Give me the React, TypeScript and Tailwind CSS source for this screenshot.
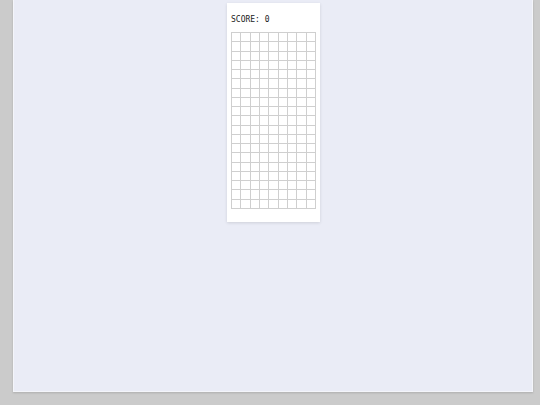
const COLS = 9;
const ROWS = 19;

function Board() {
  const cells = Array.from({ length: COLS * ROWS });
  return (
    <div className="grid h-[177px] w-[85px] grid-cols-9 grid-rows-[repeat(19,1fr)] border-l border-t border-[#cfcfcf]">
      {cells.map((_, i) => (
        <div key={i} className="border-b border-r border-[#cfcfcf]" />
      ))}
    </div>
  );
}

export default function App() {
  return (
    <div className="h-[405px] w-[540px] bg-[#cbcbcb] pl-[13px] pr-[7px] pb-[13px]">
      <div className="flex h-full w-full justify-center border border-t-0 border-[#f4f5fa] bg-[#eaecf6] shadow-[0_1px_2px_rgba(0,0,0,0.15)]">
        <div className="mt-[3px] ml-[1px] flex h-[219px] w-[93px] flex-col bg-white pl-[4px] pt-[12px] shadow-[0_1px_3px_rgba(0,0,0,0.12)]">
          <div className="h-[17px] font-['DejaVu_Sans_Mono',monospace] text-[8px] leading-[10px] text-[#222]">
            SCORE: 0
          </div>
          <Board />
        </div>
      </div>
    </div>
  );
}
